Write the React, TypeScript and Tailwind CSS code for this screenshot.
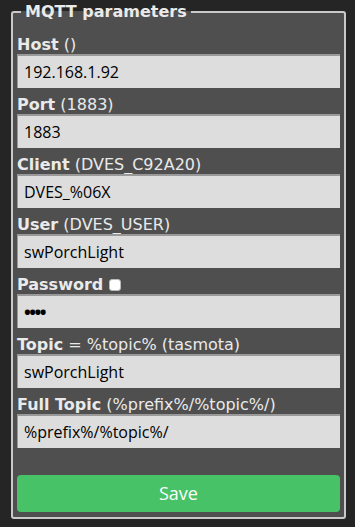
import React from "react";

interface Field {
  name: string;
  hint: string;
  value: string;
  password?: boolean;
}

const fields: Field[] = [
  { name: "Host", hint: " ()", value: "192.168.1.92" },
  { name: "Port", hint: " (1883)", value: "1883" },
  { name: "Client", hint: " (DVES_C92A20)", value: "DVES_%06X" },
  { name: "User", hint: " (DVES_USER)", value: "swPorchLight" },
  { name: "Password", hint: "", value: "••••", password: true },
  { name: "Topic", hint: " = %topic% (tasmota)", value: "swPorchLight" },
  { name: "Full Topic", hint: " (%prefix%/%topic%/)", value: "%prefix%/%topic%/" },
];

export default function App() {
  return (
    <div className="min-h-[527px] w-[355px] bg-[#252525] pl-[11px] text-[#eaeaea] font-['DejaVu_Sans',sans-serif] text-[16px] leading-[1.5]">
      <fieldset className="w-[335px] h-[519px] border-2 border-[#c9c9c9] rounded-[3px] bg-[#4f4f4f] px-[4px] pb-[4px]">
        <legend className="ml-[4px] px-[4px] font-bold leading-[24px]">MQTT parameters</legend>
        <div className="flex flex-col gap-[6px] pt-[10px]">
          {fields.map((f) => (
            <div key={f.name} className="flex flex-col">
              <div className="h-[20px] leading-[20px] pt-[1px] whitespace-nowrap flex items-center">
                <b>{f.name}</b>
                {f.password ? (
                  <span className="ml-[6px] inline-block w-[12px] h-[12px] rounded-[3px] bg-white border border-[#bbb]" />
                ) : (
                  <span className="whitespace-pre">{f.hint}</span>
                )}
              </div>
              <div className="h-[34px] bg-[#dddddd] border-t-2 border-l border-[#999] pl-[6px] flex items-center text-black font-['Open_Sans',sans-serif] text-[16px]">
                {f.password ? (
                  <span className="text-[18px] leading-none font-bold tracking-[-1.5px]">{f.value}</span>
                ) : (
                  f.value
                )}
              </div>
            </div>
          ))}
        </div>
        <button className="mt-[27px] w-full h-[37px] rounded-[4px] bg-[#47c266] text-[#faffff] font-['Open_Sans',sans-serif] text-[18px] flex items-center justify-center">
          Save
        </button>
      </fieldset>
    </div>
  );
}
